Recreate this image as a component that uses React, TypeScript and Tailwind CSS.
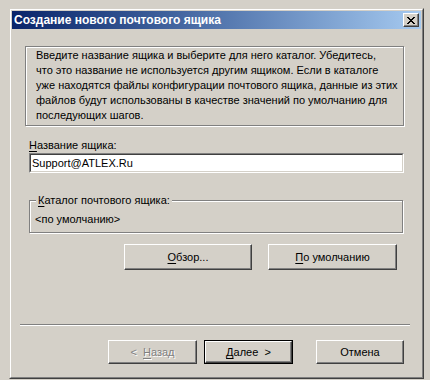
import type { ReactNode } from 'react';

const FONT = { fontFamily: '"Liberation Sans", Arial, sans-serif' };

// Win2000 classic raised button
function Button({
  children,
  width,
  height = 'h-[24px]',
  isDefault = false,
  disabled = false,
}: {
  children: ReactNode;
  width: string;
  height?: string;
  isDefault?: boolean;
  disabled?: boolean;
}) {
  const face = (
    <div
      className={`flex h-full w-full items-center justify-center border border-t-white border-l-white border-r-[#404040] border-b-[#404040] bg-[#d4d0c8] shadow-[inset_-1px_-1px_0_#808080] text-[11px] ${
        disabled ? 'text-[#808080] [text-shadow:1px_1px_0_#fff]' : 'text-black'
      }`}
    >
      {children}
    </div>
  );
  if (isDefault) {
    return <div className={`${height} ${width} border border-black`}>{face}</div>;
  }
  return <div className={`${height} ${width}`}>{face}</div>;
}

function U({ children }: { children: ReactNode }) {
  return <span className="underline underline-offset-[2px]">{children}</span>;
}

export default function App() {
  return (
    <div className="h-[380px] w-[430px] overflow-hidden bg-[#d4d0c8] pl-[9px] pt-[8px]" style={FONT}>
      {/* window frame */}
      <div className="h-[371px] w-[415px] border border-t-[#d4d0c8] border-l-[#d4d0c8] border-r-[#404040] border-b-[#404040]">
        <div className="flex h-full w-full flex-col border border-t-white border-l-white border-r-[#808080] border-b-[#808080] p-[1px]">
          {/* title bar */}
          <div className="flex h-[18px] shrink-0 items-center justify-between bg-gradient-to-r from-[#0a246a] to-[#a6caf0] pl-[2px] pr-[2px]">
            <span className="text-[12px] font-bold leading-none text-white">
              Создание нового почтового ящика
            </span>
            <div className="flex h-[14px] w-[16px] items-center justify-center border border-t-white border-l-white border-r-[#404040] border-b-[#404040] bg-[#d4d0c8] shadow-[inset_-1px_-1px_0_#808080]">
              <svg width="8" height="7" viewBox="0 0 8 7" shapeRendering="crispEdges">
                <path
                  d="M0 0h2v1H0zM6 0h2v1H6zM1 1h2v1H1zM5 1h2v1H5zM2 2h4v1H2zM3 3h2v1H3zM2 4h4v1H2zM1 5h2v1H1zM5 5h2v1H5zM0 6h2v1H0zM6 6h2v1H6z"
                  fill="#000"
                />
              </svg>
            </div>
          </div>

          {/* client area */}
          <div className="flex flex-1 flex-col text-[11px] text-black">
            <div className="ml-[13px] mt-[17px] h-[80px] w-[379px] border border-[#808080] pl-[10px] pt-[1px] leading-[15px] shadow-[inset_1px_1px_0_#fff,1px_1px_0_#fff]">
              <div className="whitespace-nowrap">
                Введите название ящика и выберите для него каталог. Убедитесь,
                <br />
                что это название не используется другим ящиком. Если в каталоге
                <br />
                уже находятся файлы конфигурации почтового ящика, данные из этих
                <br />
                файлов будут использованы в качестве значений по умолчанию для
                <br />
                последующих шагов.
              </div>
            </div>

            <div className="ml-[17px] mt-[12px] leading-[14px]">
              <U>Н</U>азвание ящика:
            </div>
            <div className="ml-[17px] mt-[1px] h-[20px] w-[375px] border border-t-[#808080] border-l-[#808080] border-r-white border-b-white">
              <div className="flex h-full w-full items-center border border-t-[#404040] border-l-[#404040] border-r-[#d4d0c8] border-b-[#d4d0c8] bg-white pl-[1px]">
                Support@ATLEX.Ru
              </div>
            </div>

            {/* group box */}
            <div className="relative ml-[17px] mt-[27px] h-[33px] w-[374px] border border-[#808080] shadow-[inset_1px_1px_0_#fff,1px_1px_0_#fff]">
              <span className="absolute -top-[8px] left-[6px] bg-[#d4d0c8] px-[2px] leading-[14px]">
                <U>К</U>аталог почтового ящика:
              </span>
              <div className="pl-[5px] pt-[11px] leading-[14px]">&lt;по умолчанию&gt;</div>
            </div>

            <div className="ml-[112px] mt-[11px] flex gap-[16px]">
              <Button width="w-[128px]" height="h-[26px]">
                <U>О</U>бзор...
              </Button>
              <Button width="w-[129px]" height="h-[26px]">
                <U>П</U>о умолчанию
              </Button>
            </div>

            {/* separator */}
            <div className="ml-[8px] mt-[54px] w-[390px] border-t border-b border-t-[#808080] border-b-white" />

            <div className="ml-[96px] mt-[14px] flex">
              <Button width="w-[89px]" disabled>
                &lt;&nbsp;&nbsp;<U>Н</U>азад
              </Button>
              <div className="ml-[7px]">
                <Button width="w-[89px]" isDefault>
                  <U>Д</U>алее&nbsp;&nbsp;&gt;
                </Button>
              </div>
              <div className="ml-[23px]">
                <Button width="w-[88px]">Отмена</Button>
              </div>
            </div>
          </div>
        </div>
      </div>
    </div>
  );
}
